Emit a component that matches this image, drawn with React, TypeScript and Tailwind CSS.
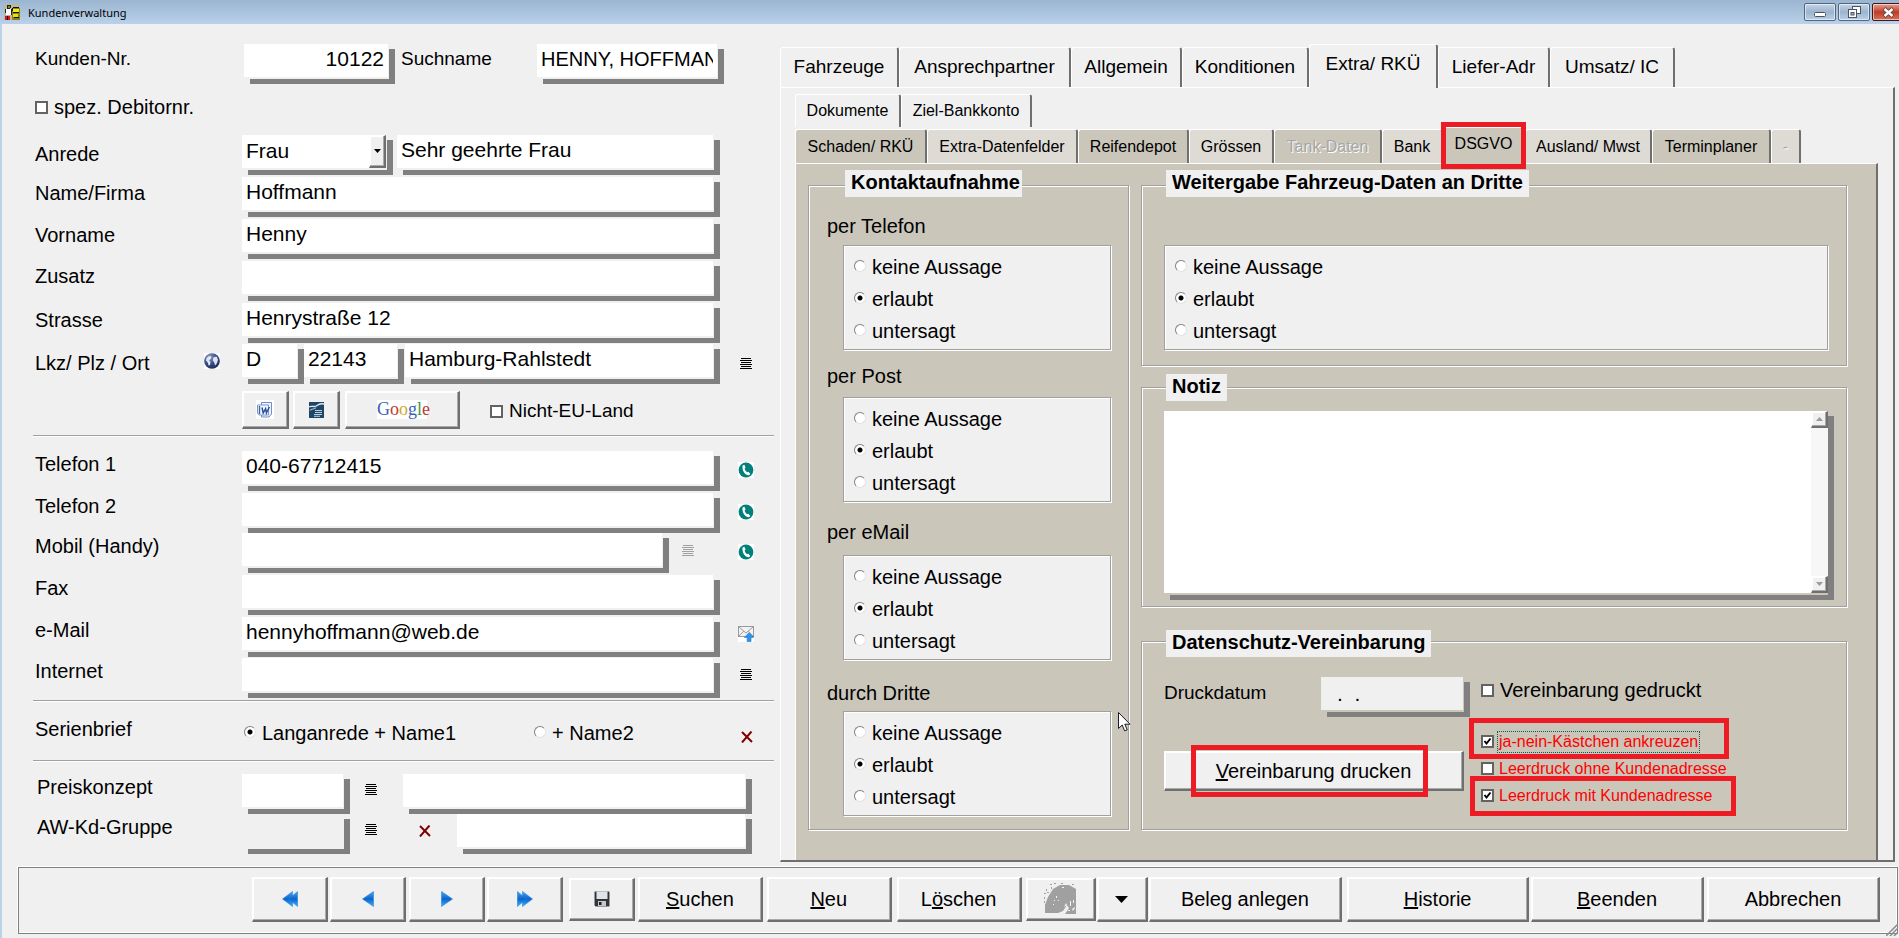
import type { ReactNode } from "react"
import clsx from "clsx"

const FIELD =
  "block h-[35px] min-w-0 border-b-2 border-r border-[#f0f0f0] bg-white px-1 pb-[3px] text-[21px] shadow-[6px_5px_0_#808080] outline-none"
const RAISED =
  "border-l border-t border-b-2 border-r-2 border-l-white border-t-white border-b-[#6f6f6f] border-r-[#6f6f6f] bg-[#f0f0f0] shadow-[inset_-1px_-1px_0_#a9a9a9,inset_1px_1px_0_#fff]"
const GROOVE = "border border-[#a0a0a0] shadow-[1px_1px_0_#fff,inset_1px_1px_0_#fff]"

/* Icons */

function ListIcon({ color = "#000" }: { color?: string }) {
  return (
    <svg width="12" height="12" viewBox="0 0 12 12" shapeRendering="crispEdges" fill={color}>
      <rect x="1" y="0" width="10" height="1" />
      <rect x="0" y="2" width="12" height="1" />
      <rect x="1" y="4" width="10" height="1" />
      <rect x="0" y="6" width="12" height="1" />
      <rect x="1" y="8" width="10" height="1" />
      <rect x="0" y="10" width="12" height="1" />
    </svg>
  )
}

function CrossIcon() {
  return (
    <svg width="12" height="12" viewBox="0 0 12 12" fill="none" stroke="#800000" strokeWidth="2">
      <path d="M1 1 L11 11 M10.5 0.5 L1 11.5" />
    </svg>
  )
}

function PhoneIcon() {
  return (
    <svg width="16" height="16" viewBox="0 0 16 16">
      <rect width="16" height="16" fill="#fff" />
      <circle cx="8" cy="8" r="7.4" fill="#007f7b" />
      <path
        d="M4.6 3.4 L6.4 2.8 L7.6 5.4 L6.6 6.4 C7 8 8 9.4 9.2 10.2 L10.5 9.7 L12.3 11.9 L11 13.2 C7.5 13.6 3.6 8.4 4.6 3.4 Z"
        fill="#fff"
      />
    </svg>
  )
}

function GlobeIcon() {
  return (
    <svg width="16" height="16" viewBox="0 0 16 16">
      <defs>
        <radialGradient id="globe" cx="0.35" cy="0.25" r="0.85">
          <stop offset="0" stopColor="#8e9dc4" />
          <stop offset="0.5" stopColor="#3b4f8a" />
          <stop offset="1" stopColor="#15244f" />
        </radialGradient>
      </defs>
      <rect width="16" height="16" fill="#fff" />
      <circle cx="8" cy="8" r="7.8" fill="url(#globe)" />
      <path d="M2.5 5 L5 3 L7.5 3.8 L6.8 6 L5 7.2 L6.5 9 L6 12 L4.6 12.6 L3.8 9.4 L2 7.4 Z" fill="#dfe5f2" />
      <path d="M9.4 4.4 L12.6 3.6 L14 6.8 L12.8 10.4 L11 12.6 L10.2 9.2 L8.8 7.6 Z" fill="#dfe5f2" />
    </svg>
  )
}

function MailIcon() {
  return (
    <svg width="16" height="16" viewBox="0 0 16 16">
      <rect width="16" height="16" fill="#fff" />
      <rect x="0.5" y="0.5" width="15" height="10" fill="#f2f2f2" stroke="#9a9a9a" />
      <path d="M1 1 L8 7 L15 1 M1 10 L5.6 5.2 M15 10 L10.4 5.2" fill="none" stroke="#9a9a9a" />
      <path d="M11 6.8 L15.6 11.4 H13 V15.6 H9.2 V11.4 H6.4 Z" fill="#2f93f0" stroke="#1a6fc4" strokeWidth="0.6" />
    </svg>
  )
}

function WordIcon() {
  return (
    <svg width="18" height="19" viewBox="0 0 18 19">
      <rect width="18" height="19" fill="#fff" />
      <path d="M5.5 2.5 H15.5 V14 L13 17 H5.5 Z" fill="#eef3fc" stroke="#6f8fc6" />
      <path d="M1.5 5 H12.5 V15 H3 L1.5 13 Z" fill="#f7faff" stroke="#7a97c9" />
      <path d="M3.5 6 V14" stroke="#3c62a8" strokeWidth="1.4" />
      <path d="M6 7.5 L7.2 13 L9.6 8.6 L10.4 13 L13.4 7" fill="none" stroke="#2a4f9c" strokeWidth="1.5" />
    </svg>
  )
}

function WriterIcon() {
  return (
    <svg width="15" height="16" viewBox="0 0 15 16">
      <rect width="15" height="16" fill="#1f4666" />
      <path d="M0 5 C3 3 5 6 8 3.5 C10 1.8 13 1.6 15 2" fill="none" stroke="#dfeaf3" strokeWidth="1.3" />
      <path d="M1 8.5 C3 6 5 8 7 5.5" fill="none" stroke="#9fbdd4" strokeWidth="1.2" />
      <path d="M6 8.5 H13 M6 10.5 H13 M5 12.5 H13 M5 14.3 H11" stroke="#b9d1e2" />
    </svg>
  )
}

function ArrowIcon({ double, flip }: { double?: boolean; flip?: boolean }) {
  return (
    <svg width="16" height="16" viewBox="0 0 16 16" className={clsx(flip && "-scale-x-100")}>
      <defs>
        <linearGradient id="arrow" x1="0" y1="0" x2="0" y2="1">
          <stop offset="0" stopColor="#4aa6ec" />
          <stop offset="0.5" stopColor="#0b63cf" />
          <stop offset="1" stopColor="#3fb4f5" />
        </linearGradient>
      </defs>
      {double ? (
        <g fill="url(#arrow)" stroke="#2487e0" strokeWidth="0.6">
          <path d="M10.5 0.5 V15.5 L0.5 8 Z" />
          <path d="M15.6 0.5 V15.5 L6.5 8 Z" />
        </g>
      ) : (
        <path d="M13.5 0.5 V15.5 L2.5 8 Z" fill="url(#arrow)" stroke="#2487e0" strokeWidth="0.6" />
      )}
    </svg>
  )
}

function DiskIcon() {
  return (
    <svg width="16" height="16" viewBox="0 0 16 16">
      <rect width="16" height="16" fill="#fff" />
      <path d="M0.5 0.5 H15.5 V15.5 H1.5 L0.5 14.5 Z" fill="#34343c" />
      <rect x="2.5" y="0.5" width="11" height="7.5" fill="#dfe4ea" />
      <rect x="4" y="10" width="8" height="5" fill="#c8c8cc" />
      <rect x="5" y="11" width="2.5" height="3" fill="#1c1c22" />
    </svg>
  )
}

function HedgehogIcon() {
  return (
    <svg width="33" height="32" viewBox="0 0 33 32" fill="#a0a0a0">
      <path d="M1 30 L1 22 L4 14 L9 6 L16 2 L25 2 L32 6 V31 H21 L25 25 L23 22 L19 28 L14 30 Z" />
      <path
        d="M6 1h2v1h-2z M10 0h2v1h-2z M17 0h2v1h-2z M2 6h1v2h-1z M0 10h2v1h-2z M3 9h2v1h-2z M0 14h1v2h-1z M7 4h1v2h-1z M28 1h2v1h-2z M0 18h1v2h-1z"
        shapeRendering="crispEdges"
      />
      <path
        d="M12 13h1v2h-1z M10 17h1v1h-1z M14 17h1v1h-1z M9 21h1v1h-1z M18 4h2v1h-2z M20 24l2-4 1 2z M26 18h1v5h-1z M29 17h1v3h-1z M24 27h2v1h-2z M28 26l3-2v1l-2 3z"
        fill="#f4f4f4"
      />
    </svg>
  )
}

function AppIcon() {
  return (
    <svg width="16" height="16" viewBox="0 0 16 16" shapeRendering="crispEdges">
      <rect width="16" height="16" fill="#b8b8a8" />
      <path d="M8 4h8v12H8z" fill="#8a8410" />
      <path d="M9 3h6v1H9z M8 4h1v3H8z M9 8h6v1H9z M10 13h5v1h-5z" fill="#111" />
      <rect x="9" y="5" width="6" height="3" fill="#f3e827" />
      <rect x="9" y="10" width="5" height="3" fill="#e9dc18" />
      <rect x="3" y="1" width="4" height="3" fill="#222" />
      <rect x="4" y="2" width="2" height="2" fill="#8a8410" />
      <path d="M2 5h5v6H2z" fill="#fff" />
      <path d="M1 5h1v4H1z M7 5h1v6H7z M3 4h3v1H3z" fill="#222" />
      <path d="M1 12h2v4H1z M4 12h2v4H4z" fill="#d8161b" />
      <path d="M3 12h1v4H3z" fill="#111" />
    </svg>
  )
}

/* Controls */

function Field({ label, value = "", className }: { label: string; value?: string; className?: string }) {
  return <input aria-label={label} defaultValue={value} className={clsx(FIELD, className)} />
}

function IconButton({ label, children, className }: { label: string; children: ReactNode; className?: string }) {
  return (
    <button aria-label={label} className={clsx("block shrink-0", className)}>
      {children}
    </button>
  )
}

function Radio({ name, label, checked }: { name: string; label: string; checked?: boolean }) {
  return (
    <label className="flex h-8 items-center gap-[6px] text-[20px] whitespace-nowrap">
      <input
        type="radio"
        name={name}
        defaultChecked={checked}
        className="mb-[3px] size-3 shrink-0 appearance-none rounded-full border border-b-[#e3e3e3] border-l-[#808080] border-r-[#e3e3e3] border-t-[#808080] bg-white checked:bg-[radial-gradient(circle,#000_0_2px,#fff_3px)]"
      />
      {label}
    </label>
  )
}

function Check({ label, checked, className, textClass, children }: {
  label: string
  checked?: boolean
  className?: string
  textClass?: string
  children?: ReactNode
}) {
  return (
    <label className={clsx("relative flex w-fit items-center whitespace-nowrap", className)}>
      <span className="relative block size-[13px] shrink-0">
        <input
          type="checkbox"
          defaultChecked={checked}
          className="peer block size-[13px] appearance-none border-2 border-[#636363] bg-white"
        />
        <svg
          width="13"
          height="13"
          viewBox="0 0 13 13"
          className="pointer-events-none absolute inset-0 hidden peer-checked:block"
        >
          <path d="M3.5 6 L5.5 8.5 L9.5 3.5" fill="none" stroke="#000" strokeWidth="2" />
        </svg>
      </span>
      <span className={textClass}>{label}</span>
      {children}
    </label>
  )
}

function Highlight({ className }: { className: string }) {
  return <span className={clsx("pointer-events-none absolute z-20 border-[5px] border-[#ed1c24]", className)} />
}

function Row({ label, labelClass = "leading-8", className = "h-[42px]", children }: {
  label: string
  labelClass?: string
  className?: string
  children: ReactNode
}) {
  return (
    <div className={clsx("flex items-start pl-[2px]", className)}>
      <span className={clsx("w-[207px] shrink-0 text-[20px]", labelClass)}>{label}</span>
      {children}
    </div>
  )
}

function Divider() {
  return <hr className="h-[2px] border-0 border-t border-[#a0a0a0] bg-white" />
}

/* Right of the long fields: one slot for an action icon */
function Slot({ children, className = "pt-[11px]" }: { children?: ReactNode; className?: string }) {
  return <div className={clsx("w-[60px] shrink-0 pl-6", className)}>{children}</div>
}

function Address() {
  return (
    <>
      <div className="flex h-12 items-start pl-[2px] pr-[56px]">
        <span className="w-[209px] shrink-0 text-[19px] leading-[30px]">Kunden-Nr.</span>
        <Field label="Kunden-Nr." value="10122" className="w-[145px] text-right" />
        <span className="ml-3 flex-1 text-[19px] leading-[30px]">Suchname</span>
        <Field label="Suchname" value="HENNY, HOFFMANN" className="w-[181px] text-[20px]!" />
      </div>
      <Check label="spez. Debitornr." className="mb-[13px] ml-[2px] h-[30px] gap-[6px] text-[20px]" />
      <Row label="Anrede" labelClass="leading-[39px]">
        <span className="relative block shrink-0">
          <select
            aria-label="Anrede"
            defaultValue="Frau"
            className={clsx(FIELD, "w-[145px] appearance-none")}
          >
            <option>Frau</option>
            <option>Herr</option>
            <option>Firma</option>
          </select>
          <span className={clsx(RAISED, "pointer-events-none absolute right-px top-0 flex h-[33px] w-[17px] items-center justify-center")}>
            <svg width="7" height="4" viewBox="0 0 7 4">
              <path d="M0 0 H7 L3.5 4 Z" />
            </svg>
          </span>
        </span>
        <Field label="Briefanrede" value="Sehr geehrte Frau" className="ml-[10px] flex-1" />
        <Slot />
      </Row>
      <Row label="Name/Firma">
        <Field label="Name/Firma" value="Hoffmann" className="flex-1" />
        <Slot />
      </Row>
      <Row label="Vorname">
        <Field label="Vorname" value="Henny" className="flex-1" />
        <Slot />
      </Row>
      <Row label="Zusatz" labelClass="leading-[30px]">
        <Field label="Zusatz" className="flex-1" />
        <Slot />
      </Row>
      <Row label="Strasse" labelClass="leading-[34px]" className="h-[41px]">
        <Field label="Strasse" value="Henrystraße 12" className="flex-1" />
        <Slot />
      </Row>
      <div className="flex h-[47px] items-start pl-[2px]">
        <span className="w-[169px] shrink-0 text-[20px] leading-[38px]">Lkz/ Plz / Ort</span>
        <IconButton label="Karte" className="mr-[22px] pt-[9px]">
          <GlobeIcon />
        </IconButton>
        <Field label="Lkz" value="D" className="w-14" />
        <Field label="Plz" value="22143" className="ml-[6px] w-[94px]" />
        <Field label="Ort" value="Hamburg-Rahlstedt" className="ml-[7px] flex-1" />
        <Slot className="pt-[14px]">
          <IconButton label="Ortsliste" className="ml-[2px]">
            <ListIcon />
          </IconButton>
        </Slot>
      </div>
      <div className="mb-[6px] ml-[209px] flex h-[38px] items-stretch">
        <button aria-label="Word" className={clsx(RAISED, "flex w-[47px] items-center justify-center")}>
          <WordIcon />
        </button>
        <button aria-label="Writer" className={clsx(RAISED, "ml-1 flex w-[47px] items-center justify-center")}>
          <WriterIcon />
        </button>
        <button aria-label="Google Maps" className={clsx(RAISED, "ml-[5px] flex w-[115px] items-center justify-center")}>
          <span className="block h-[19px] w-[50px] bg-white text-center font-['Liberation_Serif',serif] text-[18px] leading-[18px]">
            <span className="text-[#3b5fb5]">G</span>
            <span className="text-[#c0392f]">o</span>
            <span className="text-[#d2a92a]">o</span>
            <span className="text-[#3b5fb5]">g</span>
            <span className="text-[#3f9a4a]">l</span>
            <span className="text-[#c0392f]">e</span>
          </span>
        </button>
        <Check label="Nicht-EU-Land" className="ml-[30px] h-10 gap-[6px] text-[19px]" />
      </div>
    </>
  )
}

function Contact() {
  return (
    <div className="pt-[14px]">
      <Row label="Telefon 1" labelClass="leading-[26px]">
        <Field label="Telefon 1" value="040-67712415" className="flex-1" />
        <Slot>
          <IconButton label="Telefon 1 anrufen">
            <PhoneIcon />
          </IconButton>
        </Slot>
      </Row>
      <Row label="Telefon 2" labelClass="leading-[26px]" className="h-10">
        <Field label="Telefon 2" className="flex-1" />
        <Slot>
          <IconButton label="Telefon 2 anrufen">
            <PhoneIcon />
          </IconButton>
        </Slot>
      </Row>
      <Row label="Mobil (Handy)" labelClass="leading-[26px]">
        <Field label="Mobil (Handy)" className="flex-1" />
        <IconButton label="Mobil-Liste" className="ml-[19px] mr-5 pt-3">
          <ListIcon color="#a0a0a0" />
        </IconButton>
        <Slot>
          <IconButton label="Mobil anrufen">
            <PhoneIcon />
          </IconButton>
        </Slot>
      </Row>
      <Row label="Fax" labelClass="leading-[26px]">
        <Field label="Fax" className="flex-1" />
        <Slot />
      </Row>
      <Row label="e-Mail" labelClass="leading-[26px]" className="h-[41px]">
        <Field label="e-Mail" value="hennyhoffmann@web.de" className="flex-1" />
        <Slot className="pt-[9px]">
          <IconButton label="e-Mail senden">
            <MailIcon />
          </IconButton>
        </Slot>
      </Row>
      <Row label="Internet" labelClass="leading-[26px]">
        <Field label="Internet" className="flex-1" />
        <Slot>
          <IconButton label="Internet-Liste" className="ml-[2px]">
            <ListIcon />
          </IconButton>
        </Slot>
      </Row>
    </div>
  )
}

function Pricing() {
  return (
    <div className="pt-3">
      <Row label="Preiskonzept" labelClass="pl-[2px] leading-[26px]" className="h-10">
        <Field label="Preiskonzept" className="w-[102px]" />
        <IconButton label="Preiskonzept wählen" className="ml-[21px] pt-[10px]">
          <ListIcon />
        </IconButton>
        <Field label="Preiskonzept Bezeichnung" className="ml-[26px] mr-[28px] flex-1" />
      </Row>
      <Row label="AW-Kd-Gruppe" labelClass="pl-[2px] leading-[26px]" className="h-[46px]">
        <Field label="AW-Kd-Gruppe" className="w-[102px] bg-[#f0f0f0]!" />
        <IconButton label="Gruppe wählen" className="ml-[21px] pt-[10px]">
          <ListIcon />
        </IconButton>
        <IconButton label="Gruppe löschen" className="ml-[42px] pt-[11px]">
          <CrossIcon />
        </IconButton>
        <Field label="Gruppe Bezeichnung" className="ml-[26px] mr-[28px] flex-1" />
      </Row>
    </div>
  )
}

function Choice({ name, className }: { name: string; className?: string }) {
  return (
    <div className={clsx(GROOVE, "bg-[#f0f0f0] pb-[2px] pl-[10px] pt-[5px]", className)}>
      <Radio name={name} label="keine Aussage" />
      <Radio name={name} label="erlaubt" checked />
      <Radio name={name} label="untersagt" />
    </div>
  )
}

function Group({ title, titleClass, className, children }: {
  title: string
  titleClass: string
  className?: string
  children: ReactNode
}) {
  return (
    <section className={clsx(GROOVE, className)}>
      <h2 className={clsx("relative w-fit bg-[#f0f0f0] pb-[2px] text-[20px] font-bold leading-[25px] whitespace-nowrap", titleClass)}>
        {title}
      </h2>
      {children}
    </section>
  )
}

const contactWays = [
  { name: "telefon", label: "per Telefon", className: "mt-[17px] mb-[7px]" },
  { name: "post", label: "per Post", className: "mt-[14px] mb-[9px]" },
  { name: "email", label: "per eMail", className: "mt-[18px] mb-[11px]" },
  { name: "dritte", label: "durch Dritte", className: "mt-[21px] mb-[6px]" },
]

function Privacy() {
  return (
    <div className="mr-[15px] flex gap-3 border-l border-r-2 border-t border-l-white border-r-[#6f6f6f] border-t-white bg-[#cac6ba] pb-[30px] pl-3 pr-[29px] pt-[21px]">
      <Group title="Kontaktaufnahme" titleClass="-mt-4 ml-9 pl-[6px] pr-[2px]" className="w-[321px] shrink-0 pb-[13px]">
        {contactWays.map((way) => (
          <div key={way.name}>
            <div className={clsx("ml-[18px] text-[20px] leading-6", way.className)}>{way.label}</div>
            <Choice name={way.name} className="ml-[34px] mr-[17px]" />
          </div>
        ))}
      </Group>

      <div className="flex min-w-0 flex-1 flex-col">
        <Group title="Weitergabe Fahrzeug-Daten an Dritte" titleClass="-mt-4 ml-6 px-[6px]" className="pb-[15px]">
          <Choice name="fahrzeugdaten" className="ml-[22px] mr-[18px] mt-12" />
        </Group>

        <Group title="Notiz" titleClass="-mt-[14px] ml-6 px-[6px]" className="mt-[21px] pb-[11px]">
          <div className="ml-[22px] mr-[18px] mt-[10px] flex h-[184px] border-b-2 border-[#cac6ba] shadow-[6px_5px_0_#808080]">
            <textarea aria-label="Notiz" className="block flex-1 resize-none bg-white p-1 text-[21px] outline-none" />
            <div className="flex w-[17px] flex-col justify-between bg-[#f7f7f7]">
              <button aria-label="Nach oben" className={clsx(RAISED, "flex h-[17px] items-center justify-center")}>
                <svg width="7" height="4" viewBox="0 0 7 4" fill="#9a9a9a">
                  <path d="M0 4 H7 L3.5 0 Z" />
                </svg>
              </button>
              <button aria-label="Nach unten" className={clsx(RAISED, "flex h-[17px] items-center justify-center")}>
                <svg width="7" height="4" viewBox="0 0 7 4" fill="#9a9a9a">
                  <path d="M0 0 H7 L3.5 4 Z" />
                </svg>
              </button>
            </div>
          </div>
        </Group>

        <Group title="Datenschutz-Vereinbarung" titleClass="-mt-3 ml-6 px-[6px]" className="mt-[34px] flex-1">
          <div className="ml-[22px] flex items-start pt-5">
            <div className="w-[300px] shrink-0">
              <label className="flex items-start justify-between text-[19px] leading-8">
                Druckdatum
                <input
                  defaultValue=".  ."
                  className="block h-[35px] w-[143px] border-b-2 border-r border-[#cac6ba] bg-[#f0f0f0] pl-4 text-[21px] shadow-[6px_5px_0_#808080] outline-none"
                />
              </label>
              <button className={clsx(RAISED, "relative mt-[39px] block h-10 w-full text-[20px]")}>
                <u>V</u>ereinbarung drucken
                <Highlight className="-bottom-2 -top-[7px] left-[26px] right-[34px]" />
              </button>
            </div>
            <div className="ml-[17px]">
              <Check label="Vereinbarung gedruckt" className="mb-[25px] h-[26px] gap-[6px] text-[20px]" />
              <Check
                label="ja-nein-Kästchen ankreuzen"
                checked
                className="h-[27px] gap-[3px] text-[16px] text-[#ff0000]"
                textClass="border border-dotted border-[#006060] px-px leading-5"
              >
                <Highlight className="-bottom-1 -left-3 -top-[10px] w-[260px]" />
              </Check>
              <Check label="Leerdruck ohne Kundenadresse" className="h-[27px] gap-[5px] text-[16px] text-[#ff0000]" />
              <Check
                label="Leerdruck mit Kundenadresse"
                checked
                className="h-[27px] gap-[5px] text-[16px] text-[#ff0000]"
              >
                <Highlight className="-bottom-[7px] -left-[11px] -top-[6px] w-[266px]" />
              </Check>
            </div>
          </div>
        </Group>
      </div>
    </div>
  )
}

const TAB = "block shrink-0 rounded-t-[3px] border-l border-t border-r-2 border-l-white border-t-white border-r-[#6f6f6f] text-center whitespace-nowrap"

const mainTabs = [
  { label: "Fahrzeuge", width: "w-[119px]" },
  { label: "Ansprechpartner", width: "w-[172px]" },
  { label: "Allgemein", width: "w-[111px]" },
  { label: "Konditionen", width: "w-[127px] border-r-0" },
  { label: "Extra/ RKÜ", width: "w-[129px]", active: true },
  { label: "Liefer-Adr", width: "w-[112px]" },
  { label: "Umsatz/ IC", width: "w-[125px]" },
]

const subTabs = [
  { label: "Schaden/ RKÜ", width: "w-[132px]", color: "bg-[#cac6ba]" },
  { label: "Extra-Datenfelder", width: "w-[151px]", color: "bg-[#dedbd5]" },
  { label: "Reifendepot", width: "w-[111px]", color: "bg-[#cac6ba]" },
  { label: "Grössen", width: "w-[85px]", color: "bg-[#dedbd5]" },
  { label: "Tank-Daten", width: "w-[108px]", color: "bg-[#cac6ba]", disabled: true },
  { label: "Bank", width: "w-[61px]", color: "bg-[#dedbd5]" },
  { label: "DSGVO", width: "w-[82px]", color: "bg-[#cac6ba]", active: true },
  { label: "Ausland/ Mwst", width: "w-[127px]", color: "bg-[#dedbd5]" },
  { label: "Terminplaner", width: "w-[119px]", color: "bg-[#cac6ba]" },
  { label: "-", width: "w-[30px]", color: "bg-[#dedbd5]", disabled: true },
]

function Tabs() {
  return (
    <div className="mr-1 min-w-0 flex-1 pt-5">
      <div role="tablist" className="flex h-[43px] items-end">
        {mainTabs.map((tab) => (
          <button
            key={tab.label}
            role="tab"
            aria-selected={!!tab.active}
            className={clsx(TAB, "bg-[#f0f0f0] text-[19px]", tab.width, tab.active ? "relative z-10 -mb-px h-11 pb-1" : "h-10")}
          >
            {tab.label}
          </button>
        ))}
      </div>
      <div className="border-b-2 border-l border-r-2 border-t border-b-[#6f6f6f] border-l-white border-r-[#6f6f6f] border-t-white pl-[14px] pt-[6px]">
        <div role="tablist" className="mb-[2px] flex h-[33px] text-[16px]">
          <button role="tab" className={clsx(TAB, "w-[106px]")}>
            Dokumente
          </button>
          <button role="tab" className={clsx(TAB, "w-[131px]")}>
            Ziel-Bankkonto
          </button>
        </div>
        <div role="tablist" className="flex h-[34px] items-end text-[16px]">
          {subTabs.map((tab) => (
            <button
              key={tab.label}
              role="tab"
              aria-selected={!!tab.active}
              disabled={tab.disabled}
              className={clsx(
                TAB,
                tab.width,
                tab.color,
                tab.active ? "relative z-10 -mb-px h-[37px] pb-1" : "h-[34px]",
                tab.disabled && "text-[#a6a6a6] [text-shadow:1px_1px_0_#fff]",
              )}
            >
              {tab.label}
              {tab.active && <Highlight className="-inset-x-[3px] -bottom-[5px] -top-[6px]" />}
            </button>
          ))}
        </div>
        <Privacy />
      </div>
    </div>
  )
}

function Toolbar() {
  const button = clsx(RAISED, "flex h-[45px] items-center justify-center whitespace-nowrap")
  const lowButton = clsx(RAISED, "mt-px flex h-[43px] items-center justify-center")
  return (
    <footer className="relative ml-4 mr-px mt-[5px] flex h-[67px] items-start border border-[#808080] pl-[233px] pr-[17px] pt-[9px] text-[20px] shadow-[-1px_-1px_0_#fff,inset_-1px_-1px_0_#fff]">
      <button aria-label="Erster" className={clsx(button, "w-[76px]")}>
        <ArrowIcon double />
      </button>
      <button aria-label="Zurück" className={clsx(button, "ml-[2px] w-[76px]")}>
        <ArrowIcon />
      </button>
      <button aria-label="Weiter" className={clsx(button, "ml-[3px] w-[76px]")}>
        <ArrowIcon flip />
      </button>
      <button aria-label="Letzter" className={clsx(button, "ml-[2px] w-[76px]")}>
        <ArrowIcon double flip />
      </button>
      <button aria-label="Speichern" className={clsx(lowButton, "ml-[6px] w-[66px]")}>
        <DiskIcon />
      </button>
      <button className={clsx(button, "ml-[3px] flex-[124]")}>
        <u>S</u>uchen
      </button>
      <button className={clsx(button, "ml-1 flex-[124]")}>
        <u>N</u>eu
      </button>
      <button className={clsx(button, "ml-[5px] flex-[124]")}>
        L<u>ö</u>schen
      </button>
      <button aria-label="Partner" disabled className={clsx(lowButton, "ml-1 w-[70px]")}>
        <HedgehogIcon />
      </button>
      <button aria-label="Mehr" className={clsx(button, "ml-px w-[51px]")}>
        <svg width="13" height="7" viewBox="0 0 13 7">
          <path d="M0 0 H13 L6.5 7 Z" />
        </svg>
      </button>
      <button className={clsx(button, "ml-px flex-[194]")}>Beleg anlegen</button>
      <button className={clsx(button, "ml-[5px] flex-[182]")}>
        <u>H</u>istorie
      </button>
      <button className={clsx(button, "ml-[2px] flex-[173]")}>
        <u>B</u>eenden
      </button>
      <button className={clsx(button, "ml-[3px] flex-[173]")}>Abbrechen</button>
      <svg width="12" height="12" viewBox="0 0 12 12" className="absolute -bottom-[3px] -right-px" stroke="#8a8a8a" strokeWidth="1.5">
        <path d="M0 12 L12 0 M4 12 L12 4 M8 12 L12 8" />
      </svg>
    </footer>
  )
}

function TitleBar() {
  const frame = "flex h-[18px] items-center justify-center rounded-[2px] border shadow-[inset_0_0_0_1px_rgba(255,255,255,0.55)]"
  return (
    <header className="flex h-6 items-start bg-linear-to-b from-[#9bb5d0] to-[#b9d1ea] pl-1">
      <span className="pt-1">
        <AppIcon />
      </span>
      <h1 className="ml-2 flex-1 font-['Noto_Sans',sans-serif] text-[11px] leading-[26px]">Kundenverwaltung</h1>
      <div className="flex gap-[2px] overflow-hidden pt-[3px]">
        <button aria-label="Minimieren" className={clsx(frame, "w-8 border-[#52667f] bg-linear-to-b from-[#c3d4e7] via-[#9db4ce] to-[#b9d0e8]")}>
          <svg width="12" height="5" viewBox="0 0 12 5" className="mt-1">
            <rect x="0.5" y="0.5" width="11" height="4" rx="1" fill="#fff" stroke="#4c5464" />
          </svg>
        </button>
        <button aria-label="Wiederherstellen" className={clsx(frame, "w-8 border-[#52667f] bg-linear-to-b from-[#c3d4e7] via-[#9db4ce] to-[#b9d0e8]")}>
          <svg width="13" height="12" viewBox="0 0 13 12" fill="#fff" stroke="#4c5464">
            <rect x="4.5" y="0.5" width="8" height="7" />
            <rect x="0.5" y="3.5" width="8" height="8" />
            <rect x="3" y="6.5" width="3" height="2.5" fill="#9db4ce" />
          </svg>
        </button>
        <button aria-label="Schließen" className={clsx(frame, "-mr-[5px] w-8 border-[#4b1414] bg-linear-to-b from-[#e3a091] via-[#bf3b22] to-[#d0735a]")}>
          <svg width="13" height="11" viewBox="0 0 13 11" fill="none">
            <path d="M2 1.5 L11 9.5 M11 1.5 L2 9.5" stroke="#5b4349" strokeWidth="4" />
            <path d="M2.5 2 L10.5 9 M10.5 2 L2.5 9" stroke="#fff" strokeWidth="2.4" />
          </svg>
        </button>
      </div>
    </header>
  )
}

export default function App() {
  return (
    <div className="relative min-h-screen overflow-hidden bg-[#f0f0f0] font-['Liberation_Sans',Arial,sans-serif] text-black">
      <TitleBar />
      <main className="border-l-2 border-[#b9d1ea] pb-1">
        <div className="flex items-start">
          <div className="w-[round(41%,1px)] shrink-0 pl-[31px] pr-[6px] pt-5">
            <Address />
            <Divider />
            <Contact />
            <Divider />
            <div className="flex h-[58px] items-start pl-[2px]">
              <span className="w-[209px] shrink-0 text-[20px] leading-[54px]">Serienbrief</span>
              <div className="flex flex-1 gap-[78px] pt-[15px]">
                <Radio name="serienbrief" label="Langanrede + Name1" checked />
                <Radio name="serienbrief" label="+ Name2" />
              </div>
              <IconButton label="Auswahl löschen" className="mr-[21px] pt-[29px]">
                <CrossIcon />
              </IconButton>
            </div>
            <Divider />
            <Pricing />
          </div>
          <Tabs />
        </div>
        <Toolbar />
      </main>

      {/* Mouse pointer */}
      <svg width="13" height="20" viewBox="0 0 13 20" className="pointer-events-none absolute left-[1118px] top-[712px] z-30">
        <path d="M0.5 0.5 V16.5 L4.2 13 L6.6 18.8 L9.2 17.8 L6.8 12.2 H12 Z" fill="#fff" stroke="#1a1a2a" />
      </svg>
    </div>
  )
}
